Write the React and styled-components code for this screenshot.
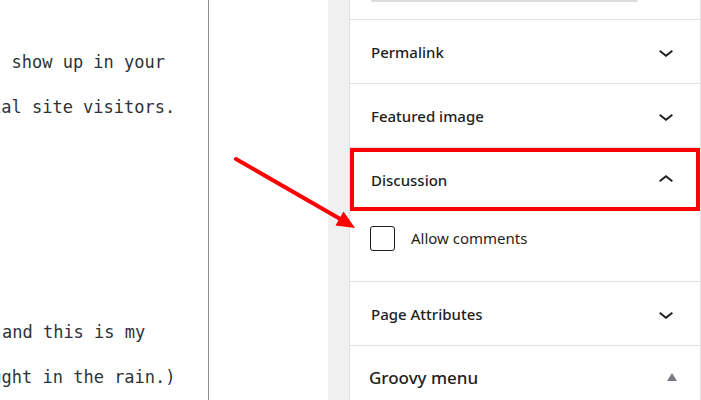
import React from "react";
import styled, { createGlobalStyle } from "styled-components";

const Global = createGlobalStyle`
  html, body { margin: 0; padding: 0; background: #fff; overflow: hidden; }
  #root { width: 701px; height: 400px; }
`;

const Page = styled.div`
  position: relative;
  display: flex;
  width: 701px;
  height: 400px;
  overflow: hidden;
  background: #fff;
`;

const Editor = styled.div`
  width: 208px;
  flex: none;
  overflow: hidden;
  border-right: 1px solid #8c8c8c;
  padding-top: 40px;
  box-sizing: content-box;
`;

const CodeLine = styled.div`
  font-family: "DejaVu Sans Mono", "Liberation Mono", monospace;
  font-size: 17px;
  line-height: 45px;
  height: 45px;
  color: #2c3338;
  white-space: pre;
  text-indent: ${(p) => p.$shift}px;
`;

const Canvas = styled.div`
  width: 119px;
  flex: none;
  background: #fff;
`;

const Gutter = styled.div`
  width: 21px;
  flex: none;
  background: #f0f0f0;
`;

const Sidebar = styled.aside`
  width: 350px;
  flex: none;
  border-left: 1px solid #e0e0e0;
  border-right: 1px solid #e0e0e0;
  background: #fff;
  display: flex;
  flex-direction: column;
  font-family: "Noto Sans", "Open Sans", sans-serif;
  color: #1e1e1e;
`;

const TopStub = styled.div`
  flex: none;
  height: 19px;
  border-bottom: 1px solid #e0e0e0;
  padding-left: 21px;
`;

const InputEdge = styled.div`
  width: 267px;
  height: 2px;
  background: #dcdcde;
  border-radius: 0 0 3px 3px;
`;

const Header = styled.div`
  height: 63px;
  flex: none;
  display: flex;
  align-items: center;
  justify-content: space-between;
  padding: 0 19px 0 21px;
  border-bottom: ${(p) => (p.$open ? "none" : "1px solid #e0e0e0")};
  outline: ${(p) => (p.$highlight ? "4px solid #ff0000" : "none")};
  outline-offset: -4px;
`;

const Title = styled.span`
  font-size: ${(p) => (p.$big ? "17px" : "15px")};
  font-weight: 500;
  color: #1e1e1e;
  margin-left: ${(p) => (p.$big ? "-2px" : "0")};
`;

const Body = styled.div`
  flex: none;
  height: 55px;
  padding-top: 15px;
  padding-left: 20px;
  border-bottom: 1px solid #e0e0e0;
  display: flex;
  align-items: flex-start;
  gap: 16px;
`;

const Checkbox = styled.span`
  width: 25px;
  height: 25px;
  box-sizing: border-box;
  border: 1.5px solid #1e1e1e;
  border-radius: 3px;
  flex: none;
`;

const Label = styled.span`
  font-size: 15px;
  line-height: 25px;
  color: #1e1e1e;
`;

const Triangle = styled.span`
  width: 0;
  height: 0;
  border-left: 5px solid transparent;
  border-right: 5px solid transparent;
  border-bottom: 8px solid #787c82;
  margin-right: 4px;
  margin-top: -2px;
`;

const Annotation = styled.svg`
  position: absolute;
  left: 0;
  top: 0;
  pointer-events: none;
`;

const Chevron = ({ up }) => (
  <svg width="30" height="30" viewBox="0 0 24 24" fill="#1e1e1e">
    {up ? (
      <path d="M6.5 12.4L12 8l5.5 4.4-.9 1.2L12 10l-4.6 3.6-.9-1.2z" />
    ) : (
      <path d="M17.5 11.6L12 16l-5.5-4.4.9-1.2L12 14l4.6-3.6 1 1.2z" />
    )}
  </svg>
);

const lines = [
  { t: "l show up in your", s: -9 },
  { t: "ial site visitors.", s: -9 },
  { t: "", s: 0 },
  { t: "", s: 0 },
  { t: "", s: 0 },
  { t: "", s: 0 },
  { t: ", and this is my", s: -18.5 },
  { t: "ught in the rain.)", s: -8.7 },
];

export default function App() {
  return (
    <>
      <Global />
      <Page>
        <Editor>
          {lines.map((l, i) => (
            <CodeLine key={i} $shift={l.s}>
              {l.t}
            </CodeLine>
          ))}
        </Editor>
        <Canvas />
        <Gutter />
        <Sidebar>
          <TopStub>
            <InputEdge />
          </TopStub>
          <Header>
            <Title>Permalink</Title>
            <Chevron />
          </Header>
          <Header>
            <Title>Featured image</Title>
            <Chevron />
          </Header>
          <Header $open $highlight>
            <Title>Discussion</Title>
            <Chevron up />
          </Header>
          <Body>
            <Checkbox />
            <Label>Allow comments</Label>
          </Body>
          <Header>
            <Title>Page Attributes</Title>
            <Chevron />
          </Header>
          <Header>
            <Title $big>Groovy menu</Title>
            <Triangle />
          </Header>
        </Sidebar>
        <Annotation width="701" height="400" viewBox="0 0 701 400">
          <line
            x1="236"
            y1="159"
            x2="342"
            y2="220"
            stroke="#ff0000"
            strokeWidth="4"
            strokeLinecap="round"
          />
          <polygon points="355,228 335.5,225.5 343.5,211.5" fill="#ff0000" />
        </Annotation>
      </Page>
    </>
  );
}
